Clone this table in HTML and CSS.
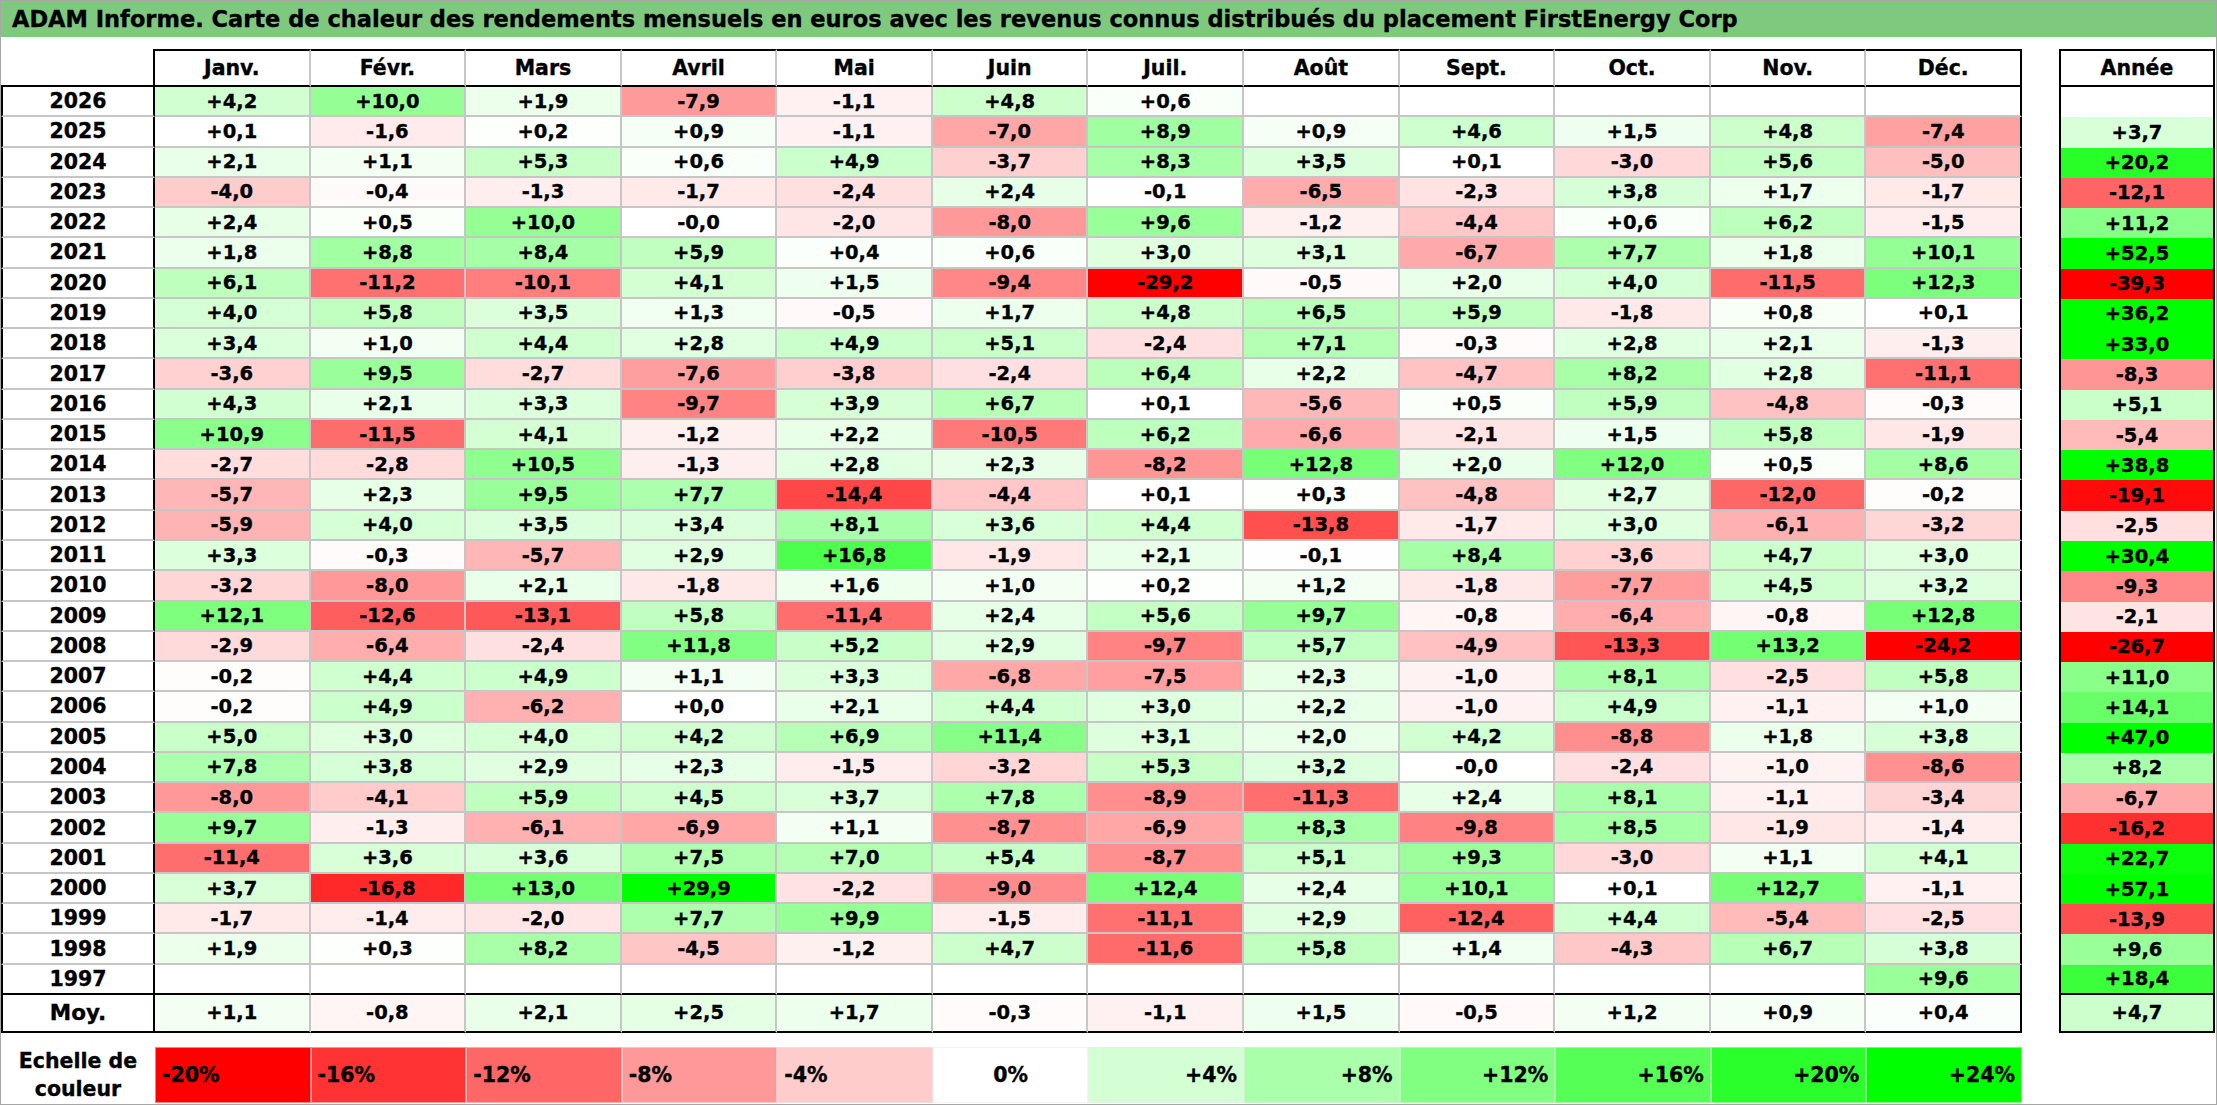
FILE: index.html
```html
<!DOCTYPE html>
<html lang="fr">
<head>
<meta charset="utf-8">
<title>ADAM Informe - FirstEnergy Corp</title>
<link rel="stylesheet" href="styles.css">
</head>
<body>
<div class="frame">
  <div class="title">ADAM Informe. Carte de chaleur des rendements mensuels en euros avec les revenus connus distribués du placement FirstEnergy Corp</div>
  <div class="content">
    <div class="main">
      <div class="table">
        <div class="row head"><div class="c"></div><div class="c">Janv.</div><div class="c">Févr.</div><div class="c">Mars</div><div class="c">Avril</div><div class="c">Mai</div><div class="c">Juin</div><div class="c">Juil.</div><div class="c">Août</div><div class="c">Sept.</div><div class="c">Oct.</div><div class="c">Nov.</div><div class="c">Déc.</div></div>
        <div class="row"><div class="c">2026</div><div class="c v">+4,2</div><div class="c v">+10,0</div><div class="c v">+1,9</div><div class="c v">-7,9</div><div class="c v">-1,1</div><div class="c v">+4,8</div><div class="c v">+0,6</div><div class="c"></div><div class="c"></div><div class="c"></div><div class="c"></div><div class="c"></div></div>
        <div class="row"><div class="c">2025</div><div class="c v">+0,1</div><div class="c v">-1,6</div><div class="c v">+0,2</div><div class="c v">+0,9</div><div class="c v">-1,1</div><div class="c v">-7,0</div><div class="c v">+8,9</div><div class="c v">+0,9</div><div class="c v">+4,6</div><div class="c v">+1,5</div><div class="c v">+4,8</div><div class="c v">-7,4</div></div>
        <div class="row"><div class="c">2024</div><div class="c v">+2,1</div><div class="c v">+1,1</div><div class="c v">+5,3</div><div class="c v">+0,6</div><div class="c v">+4,9</div><div class="c v">-3,7</div><div class="c v">+8,3</div><div class="c v">+3,5</div><div class="c v">+0,1</div><div class="c v">-3,0</div><div class="c v">+5,6</div><div class="c v">-5,0</div></div>
        <div class="row"><div class="c">2023</div><div class="c v">-4,0</div><div class="c v">-0,4</div><div class="c v">-1,3</div><div class="c v">-1,7</div><div class="c v">-2,4</div><div class="c v">+2,4</div><div class="c v">-0,1</div><div class="c v">-6,5</div><div class="c v">-2,3</div><div class="c v">+3,8</div><div class="c v">+1,7</div><div class="c v">-1,7</div></div>
        <div class="row"><div class="c">2022</div><div class="c v">+2,4</div><div class="c v">+0,5</div><div class="c v">+10,0</div><div class="c v">-0,0</div><div class="c v">-2,0</div><div class="c v">-8,0</div><div class="c v">+9,6</div><div class="c v">-1,2</div><div class="c v">-4,4</div><div class="c v">+0,6</div><div class="c v">+6,2</div><div class="c v">-1,5</div></div>
        <div class="row"><div class="c">2021</div><div class="c v">+1,8</div><div class="c v">+8,8</div><div class="c v">+8,4</div><div class="c v">+5,9</div><div class="c v">+0,4</div><div class="c v">+0,6</div><div class="c v">+3,0</div><div class="c v">+3,1</div><div class="c v">-6,7</div><div class="c v">+7,7</div><div class="c v">+1,8</div><div class="c v">+10,1</div></div>
        <div class="row"><div class="c">2020</div><div class="c v">+6,1</div><div class="c v">-11,2</div><div class="c v">-10,1</div><div class="c v">+4,1</div><div class="c v">+1,5</div><div class="c v">-9,4</div><div class="c v">-29,2</div><div class="c v">-0,5</div><div class="c v">+2,0</div><div class="c v">+4,0</div><div class="c v">-11,5</div><div class="c v">+12,3</div></div>
        <div class="row"><div class="c">2019</div><div class="c v">+4,0</div><div class="c v">+5,8</div><div class="c v">+3,5</div><div class="c v">+1,3</div><div class="c v">-0,5</div><div class="c v">+1,7</div><div class="c v">+4,8</div><div class="c v">+6,5</div><div class="c v">+5,9</div><div class="c v">-1,8</div><div class="c v">+0,8</div><div class="c v">+0,1</div></div>
        <div class="row"><div class="c">2018</div><div class="c v">+3,4</div><div class="c v">+1,0</div><div class="c v">+4,4</div><div class="c v">+2,8</div><div class="c v">+4,9</div><div class="c v">+5,1</div><div class="c v">-2,4</div><div class="c v">+7,1</div><div class="c v">-0,3</div><div class="c v">+2,8</div><div class="c v">+2,1</div><div class="c v">-1,3</div></div>
        <div class="row"><div class="c">2017</div><div class="c v">-3,6</div><div class="c v">+9,5</div><div class="c v">-2,7</div><div class="c v">-7,6</div><div class="c v">-3,8</div><div class="c v">-2,4</div><div class="c v">+6,4</div><div class="c v">+2,2</div><div class="c v">-4,7</div><div class="c v">+8,2</div><div class="c v">+2,8</div><div class="c v">-11,1</div></div>
        <div class="row"><div class="c">2016</div><div class="c v">+4,3</div><div class="c v">+2,1</div><div class="c v">+3,3</div><div class="c v">-9,7</div><div class="c v">+3,9</div><div class="c v">+6,7</div><div class="c v">+0,1</div><div class="c v">-5,6</div><div class="c v">+0,5</div><div class="c v">+5,9</div><div class="c v">-4,8</div><div class="c v">-0,3</div></div>
        <div class="row"><div class="c">2015</div><div class="c v">+10,9</div><div class="c v">-11,5</div><div class="c v">+4,1</div><div class="c v">-1,2</div><div class="c v">+2,2</div><div class="c v">-10,5</div><div class="c v">+6,2</div><div class="c v">-6,6</div><div class="c v">-2,1</div><div class="c v">+1,5</div><div class="c v">+5,8</div><div class="c v">-1,9</div></div>
        <div class="row"><div class="c">2014</div><div class="c v">-2,7</div><div class="c v">-2,8</div><div class="c v">+10,5</div><div class="c v">-1,3</div><div class="c v">+2,8</div><div class="c v">+2,3</div><div class="c v">-8,2</div><div class="c v">+12,8</div><div class="c v">+2,0</div><div class="c v">+12,0</div><div class="c v">+0,5</div><div class="c v">+8,6</div></div>
        <div class="row"><div class="c">2013</div><div class="c v">-5,7</div><div class="c v">+2,3</div><div class="c v">+9,5</div><div class="c v">+7,7</div><div class="c v">-14,4</div><div class="c v">-4,4</div><div class="c v">+0,1</div><div class="c v">+0,3</div><div class="c v">-4,8</div><div class="c v">+2,7</div><div class="c v">-12,0</div><div class="c v">-0,2</div></div>
        <div class="row"><div class="c">2012</div><div class="c v">-5,9</div><div class="c v">+4,0</div><div class="c v">+3,5</div><div class="c v">+3,4</div><div class="c v">+8,1</div><div class="c v">+3,6</div><div class="c v">+4,4</div><div class="c v">-13,8</div><div class="c v">-1,7</div><div class="c v">+3,0</div><div class="c v">-6,1</div><div class="c v">-3,2</div></div>
        <div class="row"><div class="c">2011</div><div class="c v">+3,3</div><div class="c v">-0,3</div><div class="c v">-5,7</div><div class="c v">+2,9</div><div class="c v">+16,8</div><div class="c v">-1,9</div><div class="c v">+2,1</div><div class="c v">-0,1</div><div class="c v">+8,4</div><div class="c v">-3,6</div><div class="c v">+4,7</div><div class="c v">+3,0</div></div>
        <div class="row"><div class="c">2010</div><div class="c v">-3,2</div><div class="c v">-8,0</div><div class="c v">+2,1</div><div class="c v">-1,8</div><div class="c v">+1,6</div><div class="c v">+1,0</div><div class="c v">+0,2</div><div class="c v">+1,2</div><div class="c v">-1,8</div><div class="c v">-7,7</div><div class="c v">+4,5</div><div class="c v">+3,2</div></div>
        <div class="row"><div class="c">2009</div><div class="c v">+12,1</div><div class="c v">-12,6</div><div class="c v">-13,1</div><div class="c v">+5,8</div><div class="c v">-11,4</div><div class="c v">+2,4</div><div class="c v">+5,6</div><div class="c v">+9,7</div><div class="c v">-0,8</div><div class="c v">-6,4</div><div class="c v">-0,8</div><div class="c v">+12,8</div></div>
        <div class="row"><div class="c">2008</div><div class="c v">-2,9</div><div class="c v">-6,4</div><div class="c v">-2,4</div><div class="c v">+11,8</div><div class="c v">+5,2</div><div class="c v">+2,9</div><div class="c v">-9,7</div><div class="c v">+5,7</div><div class="c v">-4,9</div><div class="c v">-13,3</div><div class="c v">+13,2</div><div class="c v">-24,2</div></div>
        <div class="row"><div class="c">2007</div><div class="c v">-0,2</div><div class="c v">+4,4</div><div class="c v">+4,9</div><div class="c v">+1,1</div><div class="c v">+3,3</div><div class="c v">-6,8</div><div class="c v">-7,5</div><div class="c v">+2,3</div><div class="c v">-1,0</div><div class="c v">+8,1</div><div class="c v">-2,5</div><div class="c v">+5,8</div></div>
        <div class="row"><div class="c">2006</div><div class="c v">-0,2</div><div class="c v">+4,9</div><div class="c v">-6,2</div><div class="c v">+0,0</div><div class="c v">+2,1</div><div class="c v">+4,4</div><div class="c v">+3,0</div><div class="c v">+2,2</div><div class="c v">-1,0</div><div class="c v">+4,9</div><div class="c v">-1,1</div><div class="c v">+1,0</div></div>
        <div class="row"><div class="c">2005</div><div class="c v">+5,0</div><div class="c v">+3,0</div><div class="c v">+4,0</div><div class="c v">+4,2</div><div class="c v">+6,9</div><div class="c v">+11,4</div><div class="c v">+3,1</div><div class="c v">+2,0</div><div class="c v">+4,2</div><div class="c v">-8,8</div><div class="c v">+1,8</div><div class="c v">+3,8</div></div>
        <div class="row"><div class="c">2004</div><div class="c v">+7,8</div><div class="c v">+3,8</div><div class="c v">+2,9</div><div class="c v">+2,3</div><div class="c v">-1,5</div><div class="c v">-3,2</div><div class="c v">+5,3</div><div class="c v">+3,2</div><div class="c v">-0,0</div><div class="c v">-2,4</div><div class="c v">-1,0</div><div class="c v">-8,6</div></div>
        <div class="row"><div class="c">2003</div><div class="c v">-8,0</div><div class="c v">-4,1</div><div class="c v">+5,9</div><div class="c v">+4,5</div><div class="c v">+3,7</div><div class="c v">+7,8</div><div class="c v">-8,9</div><div class="c v">-11,3</div><div class="c v">+2,4</div><div class="c v">+8,1</div><div class="c v">-1,1</div><div class="c v">-3,4</div></div>
        <div class="row"><div class="c">2002</div><div class="c v">+9,7</div><div class="c v">-1,3</div><div class="c v">-6,1</div><div class="c v">-6,9</div><div class="c v">+1,1</div><div class="c v">-8,7</div><div class="c v">-6,9</div><div class="c v">+8,3</div><div class="c v">-9,8</div><div class="c v">+8,5</div><div class="c v">-1,9</div><div class="c v">-1,4</div></div>
        <div class="row"><div class="c">2001</div><div class="c v">-11,4</div><div class="c v">+3,6</div><div class="c v">+3,6</div><div class="c v">+7,5</div><div class="c v">+7,0</div><div class="c v">+5,4</div><div class="c v">-8,7</div><div class="c v">+5,1</div><div class="c v">+9,3</div><div class="c v">-3,0</div><div class="c v">+1,1</div><div class="c v">+4,1</div></div>
        <div class="row"><div class="c">2000</div><div class="c v">+3,7</div><div class="c v">-16,8</div><div class="c v">+13,0</div><div class="c v">+29,9</div><div class="c v">-2,2</div><div class="c v">-9,0</div><div class="c v">+12,4</div><div class="c v">+2,4</div><div class="c v">+10,1</div><div class="c v">+0,1</div><div class="c v">+12,7</div><div class="c v">-1,1</div></div>
        <div class="row"><div class="c">1999</div><div class="c v">-1,7</div><div class="c v">-1,4</div><div class="c v">-2,0</div><div class="c v">+7,7</div><div class="c v">+9,9</div><div class="c v">-1,5</div><div class="c v">-11,1</div><div class="c v">+2,9</div><div class="c v">-12,4</div><div class="c v">+4,4</div><div class="c v">-5,4</div><div class="c v">-2,5</div></div>
        <div class="row"><div class="c">1998</div><div class="c v">+1,9</div><div class="c v">+0,3</div><div class="c v">+8,2</div><div class="c v">-4,5</div><div class="c v">-1,2</div><div class="c v">+4,7</div><div class="c v">-11,6</div><div class="c v">+5,8</div><div class="c v">+1,4</div><div class="c v">-4,3</div><div class="c v">+6,7</div><div class="c v">+3,8</div></div>
        <div class="row end"><div class="c">1997</div><div class="c"></div><div class="c"></div><div class="c"></div><div class="c"></div><div class="c"></div><div class="c"></div><div class="c"></div><div class="c"></div><div class="c"></div><div class="c"></div><div class="c"></div><div class="c v">+9,6</div></div>
        <div class="row moy"><div class="c">Moy.</div><div class="c v">+1,1</div><div class="c v">-0,8</div><div class="c v">+2,1</div><div class="c v">+2,5</div><div class="c v">+1,7</div><div class="c v">-0,3</div><div class="c v">-1,1</div><div class="c v">+1,5</div><div class="c v">-0,5</div><div class="c v">+1,2</div><div class="c v">+0,9</div><div class="c v">+0,4</div></div>
      </div>
      <div class="annee">
        <div class="row head"><div class="c">Année</div></div>
        <div class="row"><div class="c"></div></div>
        <div class="row"><div class="c v">+3,7</div></div>
        <div class="row"><div class="c v">+20,2</div></div>
        <div class="row"><div class="c v">-12,1</div></div>
        <div class="row"><div class="c v">+11,2</div></div>
        <div class="row"><div class="c v">+52,5</div></div>
        <div class="row"><div class="c v">-39,3</div></div>
        <div class="row"><div class="c v">+36,2</div></div>
        <div class="row"><div class="c v">+33,0</div></div>
        <div class="row"><div class="c v">-8,3</div></div>
        <div class="row"><div class="c v">+5,1</div></div>
        <div class="row"><div class="c v">-5,4</div></div>
        <div class="row"><div class="c v">+38,8</div></div>
        <div class="row"><div class="c v">-19,1</div></div>
        <div class="row"><div class="c v">-2,5</div></div>
        <div class="row"><div class="c v">+30,4</div></div>
        <div class="row"><div class="c v">-9,3</div></div>
        <div class="row"><div class="c v">-2,1</div></div>
        <div class="row"><div class="c v">-26,7</div></div>
        <div class="row"><div class="c v">+11,0</div></div>
        <div class="row"><div class="c v">+14,1</div></div>
        <div class="row"><div class="c v">+47,0</div></div>
        <div class="row"><div class="c v">+8,2</div></div>
        <div class="row"><div class="c v">-6,7</div></div>
        <div class="row"><div class="c v">-16,2</div></div>
        <div class="row"><div class="c v">+22,7</div></div>
        <div class="row"><div class="c v">+57,1</div></div>
        <div class="row"><div class="c v">-13,9</div></div>
        <div class="row"><div class="c v">+9,6</div></div>
        <div class="row end"><div class="c v">+18,4</div></div>
        <div class="row moy"><div class="c v">+4,7</div></div>
      </div>
    </div>
    <div class="legend">
      <div class="lab">Echelle de<br>couleur</div>
      <div class="sw neg s-m20">-20%</div>
      <div class="sw neg s-m16">-16%</div>
      <div class="sw neg s-m12">-12%</div>
      <div class="sw neg s-m8">-8%</div>
      <div class="sw neg s-m4">-4%</div>
      <div class="sw zero s-0">0%</div>
      <div class="sw pos s-p4">+4%</div>
      <div class="sw pos s-p8">+8%</div>
      <div class="sw pos s-p12">+12%</div>
      <div class="sw pos s-p16">+16%</div>
      <div class="sw pos s-p20">+20%</div>
      <div class="sw pos s-p24">+24%</div>
    </div>
  </div>
</div>
<script src="script.js"></script>
</body>
</html>
```

FILE: styles.css
```css
html, body {
  margin: 0;
  padding: 0;
  background: #ffffff;
}

body {
  font-family: "DejaVu Sans", "Liberation Sans", sans-serif;
  font-weight: bold;
  color: #000;
  -webkit-text-stroke: 0.35px #000;
}

.frame {
  width: 2217px;
  height: 1105px;
  box-sizing: border-box;
  border: 1px solid #a6a6a6;
  display: flex;
  flex-direction: column;
}

.title {
  height: 36px;
  background: #7fc97f;
  font-size: 22.5px;
  line-height: 36px;
  padding-left: 11px;
  white-space: nowrap;
  overflow: hidden;
}

.content {
  padding-top: 12px;
  display: flex;
  flex-direction: column;
}

.main {
  display: flex;
  gap: 37px;
}

.table {
  width: 2021px;
  height: 984px;
  display: flex;
  flex-direction: column;
}

.table .row {
  display: grid;
  grid-template-columns: 154px repeat(12, 1fr);
  flex: 1 1 0;
  min-height: 0;
}

.c {
  box-sizing: border-box;
  display: flex;
  align-items: center;
  justify-content: center;
  font-size: 19.5px;
  border-right: 2px solid #c6c6c6;
  border-bottom: 2px solid #c6c6c6;
  background: #ffffff;
  white-space: nowrap;
  overflow: hidden;
}

.table .row .c:first-child {
  border-left: 2px solid #000;
  border-right: 2px solid #000;
  font-size: 20.5px;
}

.table .row .c:last-child {
  border-right: 2px solid #000;
}

.table .head .c {
  border-top: 2px solid #000;
  border-bottom: 2px solid #000;
  font-size: 20.5px;
}

.table .head .c:first-child {
  border-top: none;
  border-left: none;
}

.table .end .c,
.table .moy .c {
  border-bottom-color: #000;
}

.table .moy .c:first-child {
  font-size: 21.5px;
}

.annee {
  width: 156px;
  height: 984px;
  display: flex;
  flex-direction: column;
}

.annee .row {
  display: flex;
  flex: 1 1 0;
  min-height: 0;
}

.table .row.head,
.table .row.moy,
.annee .row.head,
.annee .row.moy {
  flex: 0 0 38px;
}

.annee .c {
  flex: 1;
  border-left: 2px solid #000;
  border-right: 2px solid #000;
  border-bottom: none;
}

.annee .head .c {
  border-top: 2px solid #000;
  border-bottom: 2px solid #000;
  font-size: 20.5px;
}

.annee .end .c,
.annee .moy .c {
  border-bottom: 2px solid #000;
}

.legend {
  margin-top: 14px;
  width: 2021px;
  height: 56px;
  display: grid;
  grid-template-columns: 154px repeat(12, 1fr);
  font-size: 20.5px;
}

.lab {
  display: flex;
  align-items: center;
  justify-content: center;
  text-align: center;
  line-height: 28px;
}

.sw {
  box-sizing: border-box;
  display: flex;
  align-items: center;
  padding: 0 6px;
  border: 1px solid rgba(235, 235, 235, 0.55);
}

.sw.neg { justify-content: flex-start; }
.sw.zero { justify-content: center; }
.sw.pos { justify-content: flex-end; }

.s-m20 { background: #ff0000; }
.s-m16 { background: #ff3333; }
.s-m12 { background: #ff6666; }
.s-m8 { background: #ff9999; }
.s-m4 { background: #ffcccc; }
.s-0 { background: #ffffff; }
.s-p4 { background: #d4ffd4; }
.s-p8 { background: #aaffaa; }
.s-p12 { background: #80ff80; }
.s-p16 { background: #55ff55; }
.s-p20 { background: #2bff2b; }
.s-p24 { background: #00ff00; }
```

FILE: script.js
```js
(function () {
  var cells = document.querySelectorAll('.c.v');
  for (var i = 0; i < cells.length; i++) {
    var t = cells[i].textContent.trim().replace(',', '.');
    var v = parseFloat(t);
    if (isNaN(v)) continue;
    var r, g, b;
    if (v >= 0) {
      var k = Math.round(255 * (1 - Math.min(v / 24, 1)));
      r = k; g = 255; b = k;
    } else {
      var k2 = Math.round(255 * (1 - Math.min(-v / 20, 1)));
      r = 255; g = k2; b = k2;
    }
    cells[i].style.backgroundColor = 'rgb(' + r + ',' + g + ',' + b + ')';
  }
})();
```
